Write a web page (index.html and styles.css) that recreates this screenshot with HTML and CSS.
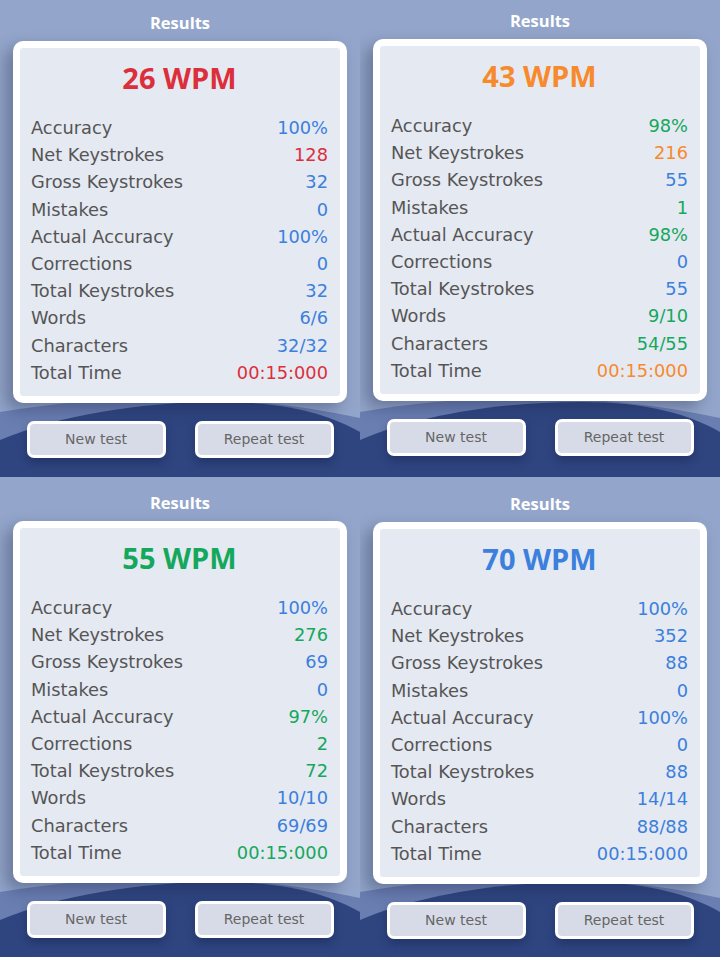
FILE: index.html
```html
<!DOCTYPE html>
<html>
<head>
    <meta http-equiv="Content-Type" content="text/html; charset=utf-8" />
    <meta name='viewport' content='width=device-width, initial-scale=1.0'/>
    <title>Results</title>
    <link rel="stylesheet" href="styles.css">
</head>
<body>
<div class="grid">
    <!--26 wpm-->
    <div class="panel p1">
        <h2 class="title">Results</h2>
        <div class="card">
            <div class="card_in">
                <div class="wpm red">26 WPM</div>
                <ul class="stats">
                    <li><span>Accuracy</span><b class="blue">100%</b></li>
                    <li><span>Net Keystrokes</span><b class="red">128</b></li>
                    <li><span>Gross Keystrokes</span><b class="blue">32</b></li>
                    <li><span>Mistakes</span><b class="blue">0</b></li>
                    <li><span>Actual Accuracy</span><b class="blue">100%</b></li>
                    <li><span>Corrections</span><b class="blue">0</b></li>
                    <li><span>Total Keystrokes</span><b class="blue">32</b></li>
                    <li><span>Words</span><b class="blue">6/6</b></li>
                    <li><span>Characters</span><b class="blue">32/32</b></li>
                    <li><span>Total Time</span><b class="red">00:15:000</b></li>
                </ul>
            </div>
        </div>
        <div class="btns">
            <a href="javascript:;" class="btn">New test</a>
            <a href="javascript:;" class="btn">Repeat test</a>
        </div>
    </div>
    <!--43 wpm-->
    <div class="panel p2">
        <h2 class="title">Results</h2>
        <div class="card">
            <div class="card_in">
                <div class="wpm orange">43 WPM</div>
                <ul class="stats">
                    <li><span>Accuracy</span><b class="green">98%</b></li>
                    <li><span>Net Keystrokes</span><b class="orange">216</b></li>
                    <li><span>Gross Keystrokes</span><b class="blue">55</b></li>
                    <li><span>Mistakes</span><b class="green">1</b></li>
                    <li><span>Actual Accuracy</span><b class="green">98%</b></li>
                    <li><span>Corrections</span><b class="blue">0</b></li>
                    <li><span>Total Keystrokes</span><b class="blue">55</b></li>
                    <li><span>Words</span><b class="green">9/10</b></li>
                    <li><span>Characters</span><b class="green">54/55</b></li>
                    <li><span>Total Time</span><b class="orange">00:15:000</b></li>
                </ul>
            </div>
        </div>
        <div class="btns">
            <a href="javascript:;" class="btn">New test</a>
            <a href="javascript:;" class="btn">Repeat test</a>
        </div>
    </div>
    <!--55 wpm-->
    <div class="panel p3">
        <h2 class="title">Results</h2>
        <div class="card">
            <div class="card_in">
                <div class="wpm green">55 WPM</div>
                <ul class="stats">
                    <li><span>Accuracy</span><b class="blue">100%</b></li>
                    <li><span>Net Keystrokes</span><b class="green">276</b></li>
                    <li><span>Gross Keystrokes</span><b class="blue">69</b></li>
                    <li><span>Mistakes</span><b class="blue">0</b></li>
                    <li><span>Actual Accuracy</span><b class="green">97%</b></li>
                    <li><span>Corrections</span><b class="green">2</b></li>
                    <li><span>Total Keystrokes</span><b class="green">72</b></li>
                    <li><span>Words</span><b class="blue">10/10</b></li>
                    <li><span>Characters</span><b class="blue">69/69</b></li>
                    <li><span>Total Time</span><b class="green">00:15:000</b></li>
                </ul>
            </div>
        </div>
        <div class="btns">
            <a href="javascript:;" class="btn">New test</a>
            <a href="javascript:;" class="btn">Repeat test</a>
        </div>
    </div>
    <!--70 wpm-->
    <div class="panel p4">
        <h2 class="title">Results</h2>
        <div class="card">
            <div class="card_in">
                <div class="wpm blue">70 WPM</div>
                <ul class="stats">
                    <li><span>Accuracy</span><b class="blue">100%</b></li>
                    <li><span>Net Keystrokes</span><b class="blue">352</b></li>
                    <li><span>Gross Keystrokes</span><b class="blue">88</b></li>
                    <li><span>Mistakes</span><b class="blue">0</b></li>
                    <li><span>Actual Accuracy</span><b class="blue">100%</b></li>
                    <li><span>Corrections</span><b class="blue">0</b></li>
                    <li><span>Total Keystrokes</span><b class="blue">88</b></li>
                    <li><span>Words</span><b class="blue">14/14</b></li>
                    <li><span>Characters</span><b class="blue">88/88</b></li>
                    <li><span>Total Time</span><b class="blue">00:15:000</b></li>
                </ul>
            </div>
        </div>
        <div class="btns">
            <a href="javascript:;" class="btn">New test</a>
            <a href="javascript:;" class="btn">Repeat test</a>
        </div>
    </div>
</div>
</body>
</html>
```

FILE: styles.css
```css
@charset "utf-8";
html,body,h1,h2,h3,div,p,ul,li{padding:0; margin:0; border:0;}
ul{list-style:none;}
html,body{width:100%;height:100%;overflow:hidden;}
body{font-family:"DejaVu Sans","Liberation Sans",sans-serif;background:#93a5ca;}

.grid{
    display:grid;
    grid-template-columns:360px 360px;
    grid-template-rows:477px 480px;
}

/*panel*/
.panel{
    box-sizing:border-box;
    background:#93a5ca url("data:image/svg+xml,%3Csvg xmlns='http://www.w3.org/2000/svg' viewBox='0 0 360 90' width='360' height='90'%3E%3Cpath d='M0 25C120 5 240 5 360 31V90H0Z' fill='%236a7eb2'/%3E%3Cpath d='M0 53C60 28 140 15 220 15C290 15 330 28 360 45V90H0Z' fill='%232f4580'/%3E%3C/svg%3E") no-repeat center bottom;
    overflow:hidden;
}
.p1{padding-top:13px;}
.p2{padding-top:11px;}
.p3{padding-top:16px;}
.p4{padding-top:17px;}

.title{
    font-family:"Open Sans","DejaVu Sans",sans-serif;
    font-weight:700;
    font-size:16.5px;
    line-height:20px;
    color:#fff;
    text-align:center;
}

.card{
    width:334px;
    margin:8px auto 0;
    box-sizing:border-box;
    padding:7px;
    background:#fff;
    border-radius:10px;
    box-shadow:-7px 7px 16px rgba(25,35,70,.35);
}
.card_in{
    background:#e5e9f2;
    border-radius:3px;
    padding:12px 12px 10px 11px;
}
.wpm{
    font-family:"Open Sans","DejaVu Sans",sans-serif;
    font-weight:700;
    font-size:29px;
    line-height:36px;
    text-align:center;
    margin-bottom:18px;
}
.stats li{
    display:flex;
    justify-content:space-between;
    font-size:17.8px;
    line-height:27.2px;
    color:#555;
}
.stats b{font-weight:normal;}

.red{color:#dc2f3c;}
.orange{color:#f68a2c;}
.green{color:#14a85c;}
.blue{color:#3b80dc;}

/*buttons*/
.btns{
    display:flex;
    justify-content:center;
    gap:29px;
    margin-top:18px;
}
.btn{
    display:block;
    width:139px;
    height:37px;
    box-sizing:border-box;
    border:3px solid #fff;
    border-radius:7px;
    background:#d7dbe7;
    color:#666;
    font-size:14px;
    line-height:31px;
    text-align:center;
    text-decoration:none;
    box-shadow:0 5px 10px rgba(15,25,60,.35);
}
```
